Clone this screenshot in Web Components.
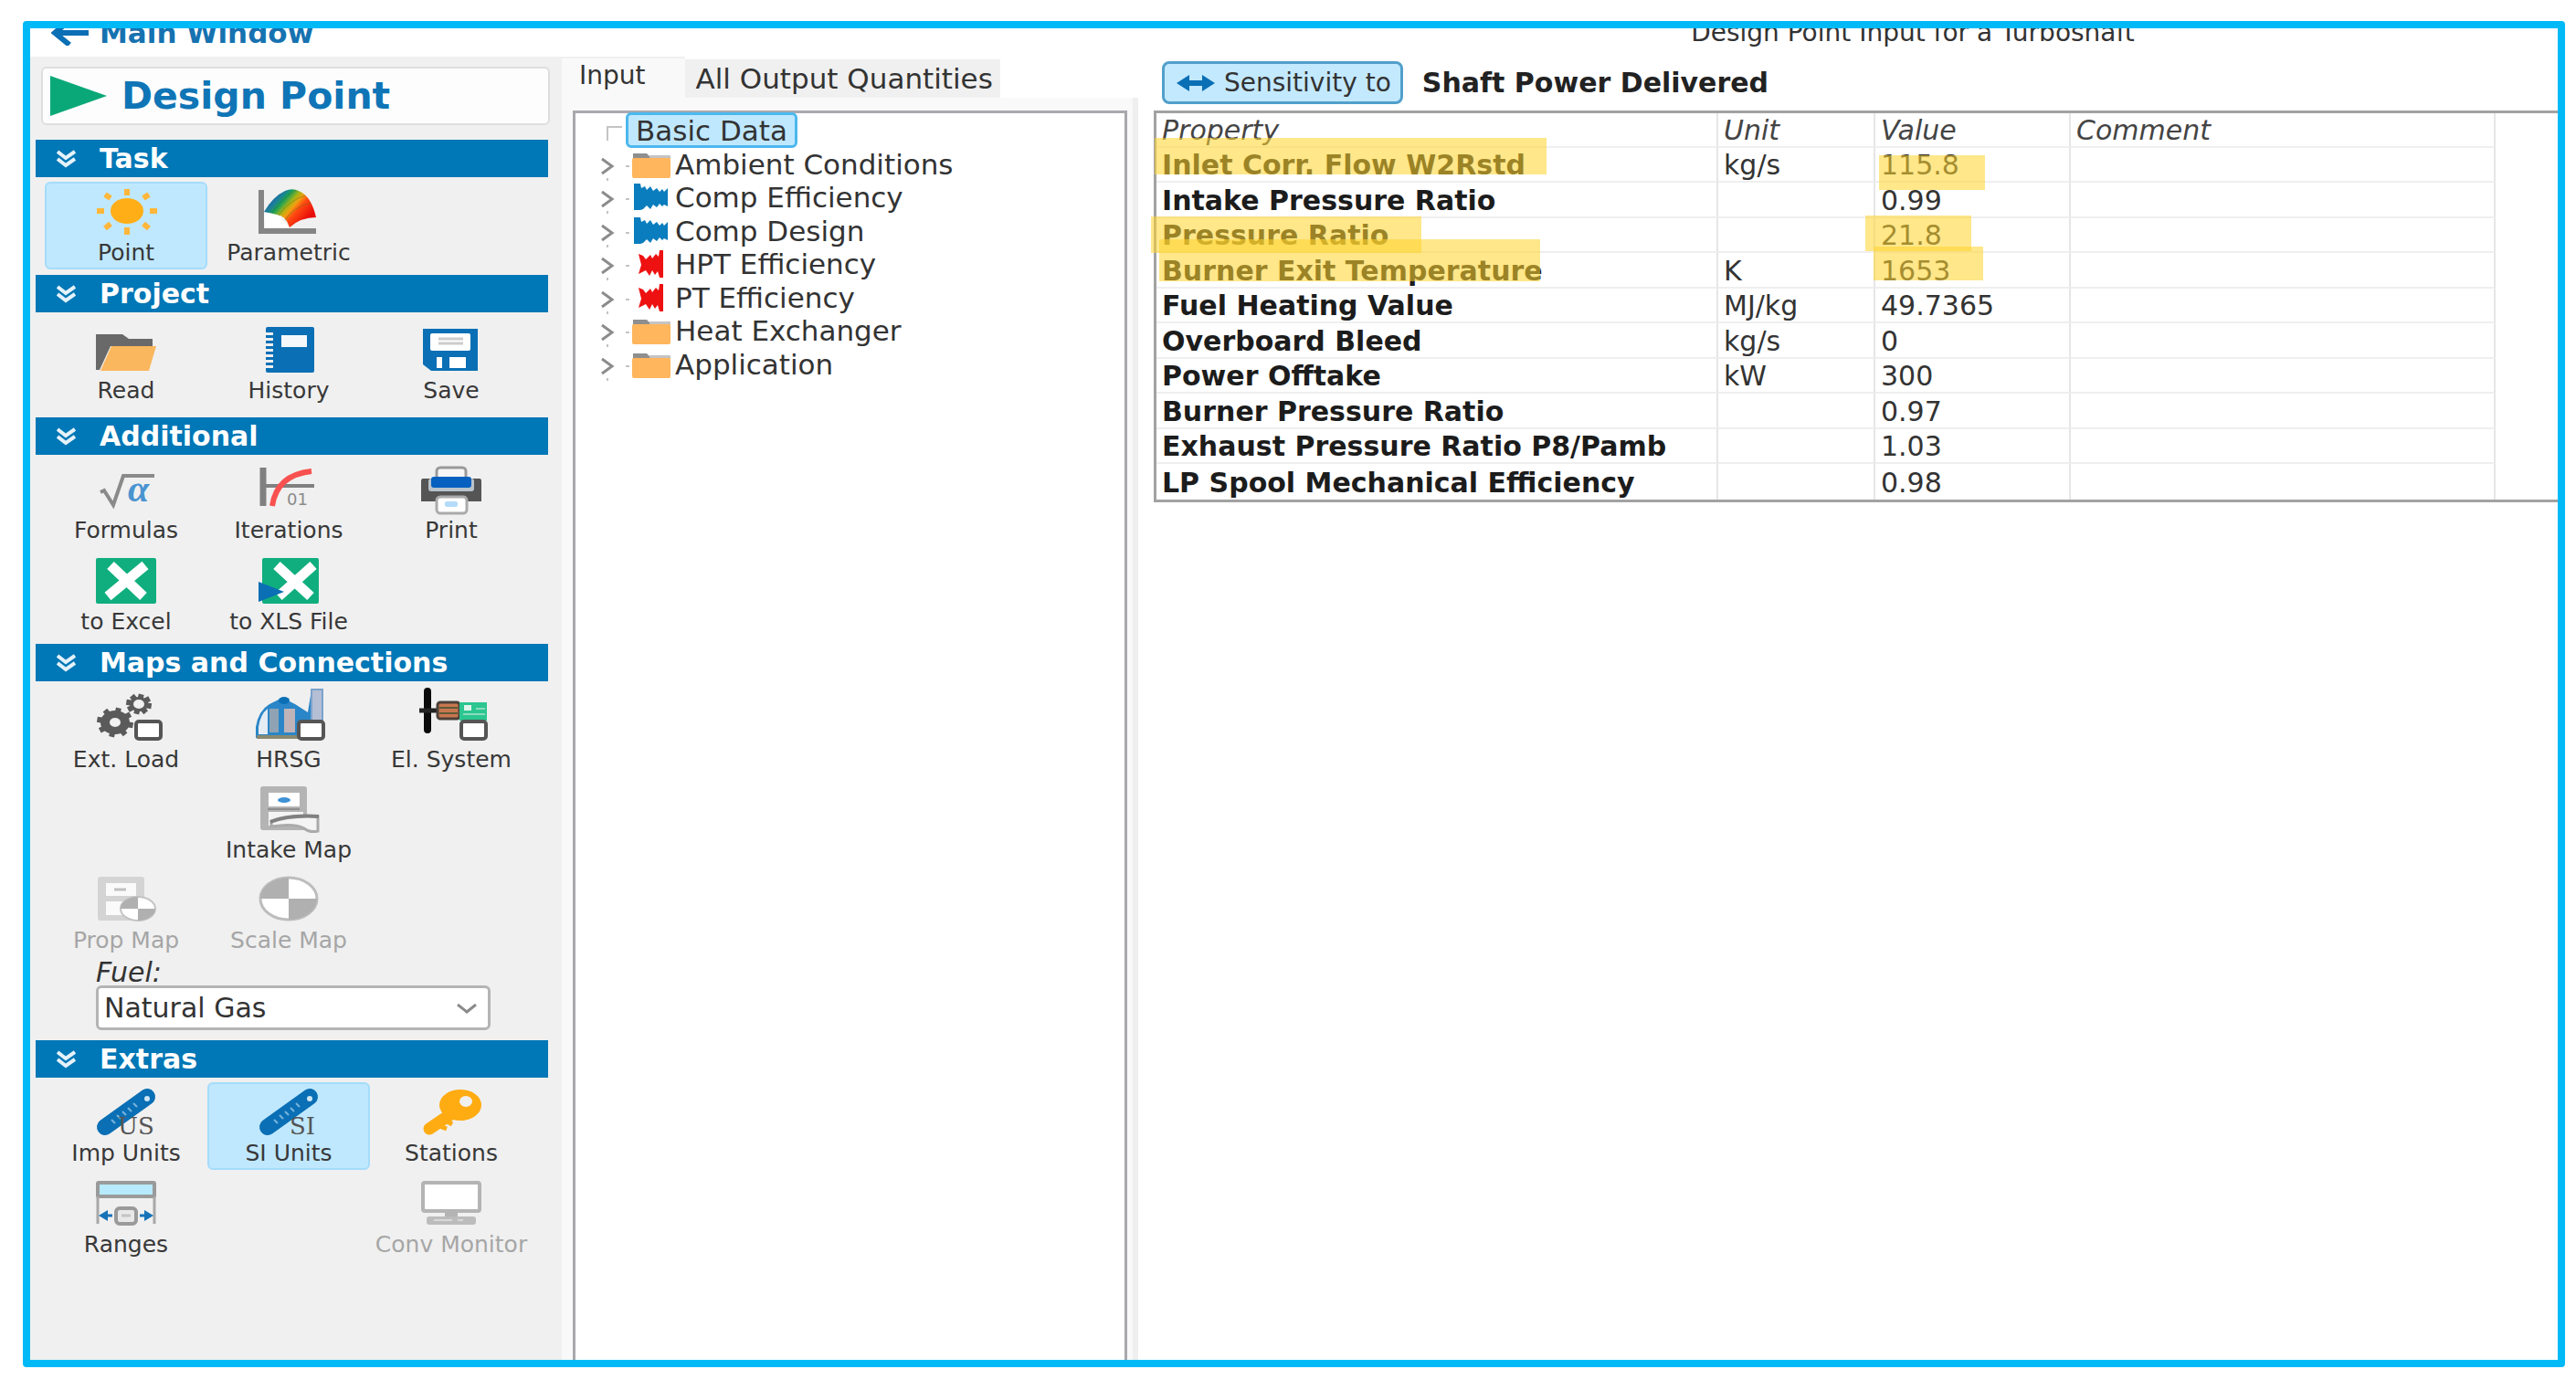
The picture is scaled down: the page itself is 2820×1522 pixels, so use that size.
<!DOCTYPE html>
<html lang="en">
<head>
<meta charset="utf-8">
<title>Design Point Input for a Turboshaft</title>
<style>
	html, body {
		height: 100%;
		margin: 0;
	}
	body {
		display: flex;
		background: #fff;
		color: #333;
		font-family: "DejaVu Sans", Verdana, sans-serif;
		font-size: 30px;
		line-height: 34px;
	}
</style>
</head>
<body>
<gt-window>
	<gt-sidebar slot="sidebar">
		<gt-section heading="Task">
			<gt-tool icon="sun" label="Point" selected></gt-tool>
			<gt-tool icon="surface" label="Parametric"></gt-tool>
		</gt-section>
		<gt-section heading="Project" roomy>
			<gt-tool icon="folder" label="Read"></gt-tool>
			<gt-tool icon="notebook" label="History"></gt-tool>
			<gt-tool icon="disk" label="Save"></gt-tool>
		</gt-section>
		<gt-section heading="Additional">
			<gt-tool icon="root" label="Formulas"></gt-tool>
			<gt-tool icon="curve" label="Iterations"></gt-tool>
			<gt-tool icon="printer" label="Print"></gt-tool>
			<gt-tool icon="excel" label="to Excel"></gt-tool>
			<gt-tool icon="xls" label="to XLS File"></gt-tool>
		</gt-section>
		<gt-section heading="Maps and Connections" roomy>
			<gt-tool icon="gears" label="Ext. Load"></gt-tool>
			<gt-tool icon="plant" label="HRSG"></gt-tool>
			<gt-tool icon="motor" label="El. System"></gt-tool>
			<gt-tool icon="cabinet" label="Intake Map" column="2"></gt-tool>
			<gt-tool icon="propmap" label="Prop Map" column="1" disabled></gt-tool>
			<gt-tool icon="target" label="Scale Map" disabled></gt-tool>
			<gt-fuel></gt-fuel>
		</gt-section>
		<gt-section heading="Extras">
			<gt-tool icon="rulerus" label="Imp Units"></gt-tool>
			<gt-tool icon="rulersi" label="SI Units" selected></gt-tool>
			<gt-tool icon="key" label="Stations"></gt-tool>
			<gt-tool icon="ranges" label="Ranges"></gt-tool>
			<gt-tool icon="monitor" label="Conv Monitor" column="3" disabled></gt-tool>
		</gt-section>
	</gt-sidebar>
	<gt-tabs slot="tree">
		<gt-tree-item selected>Basic Data</gt-tree-item>
		<gt-tree-item icon="dir">Ambient Conditions</gt-tree-item>
		<gt-tree-item icon="comp">Comp Efficiency</gt-tree-item>
		<gt-tree-item icon="comp">Comp Design</gt-tree-item>
		<gt-tree-item icon="turb">HPT Efficiency</gt-tree-item>
		<gt-tree-item icon="turb">PT Efficiency</gt-tree-item>
		<gt-tree-item icon="dir">Heat Exchanger</gt-tree-item>
		<gt-tree-item icon="dir">Application</gt-tree-item>
	</gt-tabs>
	<gt-properties slot="properties"></gt-properties>
</gt-window>

<script>
const BOX = '<rect x="44" y="28" width="27" height="19" rx="3" fill="#fff" stroke="#555" stroke-width="4"/>';

const gear = ( cx, cy, rx, ry, hole ) => {
	let teeth = '';
	for ( let i = 0; i < 8; i++ ) {
		const a = i * Math.PI / 4 + 0.2;
		const x = ( cx + Math.cos( a ) * rx ).toFixed( 1 );
		const y = ( cy + Math.sin( a ) * ry ).toFixed( 1 );
		teeth += `M${ cx } ${ cy }L${ x } ${ y }`;
	}
	return `<path d="${ teeth }" stroke="#5a5a5a" stroke-width="6"/>
		<ellipse cx="${ cx }" cy="${ cy }" rx="${ rx - 4 }" ry="${ ry - 3 }" fill="#5a5a5a"/>
		<ellipse cx="${ cx }" cy="${ cy }" rx="${ hole + 1 }" ry="${ hole }" fill="#f0f0f0"/>`;
};

const ruler = ( text, x ) => `
	<path d="M10 41L56 8" stroke="#0a6fb5" stroke-width="18" stroke-linecap="round"/>
	<path d="M17 33l4 4M23 28l4 4M29 24l4 4M35 20l4 4M41 15l4 4" stroke="#79b4dc" stroke-width="2"/>
	<circle cx="56" cy="10" r="3" fill="#cfe6f5"/>
	<text x="${ x }" y="49" font-family="DejaVu Serif, serif" font-size="26" fill="#555">${ text }</text>`;

/* All tool icons share a 66x50 box; some reach a little over its edge. */
const ICONS = {
	sun: `<ellipse cx="34" cy="24" rx="18" ry="14" fill="#ffae17"/>
		<path d="M34 0v7M34 42v8M1 24h8M59 24h8M10 6l6 4M58 6l-6 4M10 43l6 -5M58 43l-6 -5" stroke="#ffb63a" stroke-width="6"/>`,
	surface: `<defs><linearGradient id="g" x1="0" y1="0.2" x2="0.85" y2="0.75">
			<stop offset="0.08" stop-color="#1c5fa8"/><stop offset="0.26" stop-color="#1d7f9a"/>
			<stop offset="0.36" stop-color="#14a05a"/><stop offset="0.5" stop-color="#a8b414"/>
			<stop offset="0.6" stop-color="#f0a010"/><stop offset="0.72" stop-color="#ff4a10"/>
			<stop offset="1" stop-color="#e80c0c"/></linearGradient></defs>
		<path d="M3 1V46H63" fill="none" stroke="#858585" stroke-width="6"/>
		<path d="M6 26L21 28L34 42H7Z" fill="#fff"/>
		<path d="M6 25Q16 8 29 2Q38 -2 46 3Q58 9 63 31Q46 31 34 42Q30 29 20 28Q13 26 6 25Z" fill="url(#g)"/>
		<path d="M14 26Q26 10 41 1M22 29Q34 12 51 7M29 34Q38 20 57 15" fill="none" stroke="#5a6a20" stroke-opacity=".45"/>`,
	folder: `<path d="M0 8H29L36 13H62V21H16L4 47H0Z" fill="#696969"/>
		<path d="M17 21H66L58 48H5Z" fill="#fbb75e"/>`,
	notebook: `<rect x="8" y="0" width="53" height="50" rx="2" fill="#0a6fb5"/>
		<rect x="25" y="9" width="28" height="13" fill="#f4f8fb"/>
		<path d="M12 6V46" stroke="#f0f0f0" stroke-width="8" stroke-dasharray="3 3"/>`,
	disk: `<path d="M2 2H62V48H11L2 41Z" fill="#0a6fb5"/>
		<rect x="10" y="7" width="44" height="19" rx="2" fill="#fff"/>
		<path d="M19 13H46M19 18H46" stroke="#ccc" stroke-width="3"/>
		<rect x="17" y="33" width="32" height="12" fill="#fff"/>
		<rect x="23" y="33" width="8" height="12" fill="#0a6fb5"/>`,
	root: `<path d="M5 28L9 26L19 42L30 10H64" fill="none" stroke="#8a8a8a" stroke-width="4"/>
		<text x="35" y="38" font-family="Liberation Serif, serif" font-size="42" font-style="italic" font-weight="bold" fill="#4a94d0">α</text>`,
	curve: `<path d="M5 1V43" stroke="#808080" stroke-width="7"/>
		<path d="M5 21H61" stroke="#808080" stroke-width="4"/>
		<path d="M15 43Q20 9 58 5" fill="none" stroke="#f8514f" stroke-width="6"/>
		<text x="31" y="42" font-size="18" fill="#8a8a8a">01</text>`,
	printer: `<rect x="17" y="1" width="32" height="20" rx="4" fill="#f6f6f6" stroke="#9a9a9a" stroke-width="3"/>
		<path d="M2 13H64Q66 13 66 16V38H0V16Q0 13 2 13Z" fill="#555"/>
		<rect x="8" y="13" width="50" height="14" rx="3" fill="#b9c3cc"/>
		<rect x="11" y="11" width="44" height="12" rx="3" fill="#0560bf"/>
		<rect x="17" y="33" width="33" height="18" rx="4" fill="#fff" stroke="#aaa" stroke-width="3"/>
		<rect x="26" y="38" width="14" height="6" rx="2" fill="#b4dcfa"/>`,
	excel: `<rect width="66" height="50" rx="2" fill="#10ae7e"/>
		<path d="M16 8L52 42M54 8L13 42" stroke="#fff" stroke-width="11"/>`,
	xls: `<rect x="4" width="62" height="50" rx="2" fill="#10ae7e"/>
		<path d="M20 8L57 42M60 8L22 42" stroke="#fff" stroke-width="11"/>
		<path d="M0 26L28 37L0 48Z" fill="#0a6fb5"/>`,
	gears: gear( 21, 29, 20, 16, 5 ) + gear( 47, 9, 14, 11, 5 ) + BOX,
	plant: `<path d="M-3 46V34Q0 16 12 9L26 2L40 9L54 18L58 -7H70V46Z" fill="#2a86c8"/>
		<path d="M0 42V34Q2 20 10 14V42Z" fill="#e4ecf4"/>
		<rect x="12" y="14" width="10" height="26" fill="#8fa3b4"/>
		<rect x="28" y="14" width="12" height="26" fill="#c0b4b8"/>
		<rect x="58" y="-7" width="12" height="34" fill="#b4bed4" stroke="#7ba3ce" stroke-width="2"/>
		<ellipse cx="28" cy="5" rx="6" ry="4" fill="#0a6fb5"/>
		<path d="M-2 45H44" stroke="#8a8a70" stroke-width="4"/>` + BOX,
	motor: `<path d="M7 -5V37" stroke="#0a0a0a" stroke-width="8" stroke-linecap="round"/>
		<path d="M-2 16H18" stroke="#222" stroke-width="5"/>
		<rect x="18" y="7" width="24" height="18" rx="3" fill="#c9764f" stroke="#4a4038" stroke-width="3"/>
		<path d="M20 13H40M20 19H40" stroke="#5c5a38" stroke-width="2"/>
		<rect x="42" y="7" width="30" height="20" fill="#2cc690"/>
		<rect x="47" y="10" width="8" height="6" fill="#dff5ec"/>
		<path d="M60 14H70M46 20H70" stroke="#8adcc0" stroke-width="2"/>` + BOX,
	cabinet: `<rect x="2" y="0" width="51" height="48" rx="3" fill="#b4b4b4"/>
		<rect x="11" y="7" width="34" height="15" fill="#fff"/>
		<ellipse cx="28" cy="15" rx="7" ry="3" fill="#3f92d6"/>
		<path d="M10 25H45" stroke="#8e8e8e" stroke-width="2"/>
		<rect x="11" y="28" width="38" height="15" fill="#f4f4f4"/>
		<path d="M14 38Q34 30 65 33V49Q56 51 50 46Q40 40 14 44Z" fill="#f4f4f4" stroke="#aaa" stroke-width="3"/>
		<path d="M13 39Q34 31 66 33" fill="none" stroke="#808080" stroke-width="4"/>`,
	propmap: `<rect x="2" y="0" width="51" height="48" rx="3" fill="#d4d4d4"/>
		<rect x="11" y="7" width="33" height="14" fill="#fafafa"/>
		<path d="M20 14H33" stroke="#c0c0c0" stroke-width="3"/>
		<rect x="11" y="27" width="33" height="15" fill="#fafafa"/>
		<ellipse cx="46" cy="35" rx="19" ry="13" fill="#fff" stroke="#c4c4c4" stroke-width="2"/>
		<path d="M46 35V22A19 13 0 0 0 27 35ZM46 35V48A19 13 0 0 0 65 35Z" fill="#b0b0b0"/>`,
	target: `<ellipse cx="33" cy="24" rx="31" ry="23" fill="#fff" stroke="#bdbdbd" stroke-width="3"/>
		<path d="M33 24V1A31 23 0 0 0 2 24ZM33 24V47A31 23 0 0 0 64 24Z" fill="#b0b0b0"/>`,
	rulerus: ruler( 'US', 24 ),
	rulersi: ruler( 'SI', 34 ),
	key: `<path d="M34 26L9 43" stroke="#ffab12" stroke-width="13" stroke-linecap="round"/>
		<path d="M20 40l8 3M27 34l7 4" stroke="#ffab12" stroke-width="5"/>
		<ellipse cx="43" cy="17" rx="23" ry="17" fill="#ffab12"/>
		<ellipse cx="49" cy="13" rx="7" ry="6" fill="#f0f0f0"/>`,
	ranges: `<rect x="2" y="2" width="62" height="15" rx="1" fill="#b6eafc" stroke="#9a9a9a" stroke-width="4"/>
		<path d="M2 17V47M64 17V47" stroke="#a8a8a8" stroke-width="3"/>
		<rect x="22" y="30" width="22" height="17" rx="4" fill="#e8e8e8" stroke="#9a9a9a" stroke-width="4"/>
		<path d="M28 38H38" stroke="#c4c4c4" stroke-width="3"/>
		<path d="M3 38L13 32V44ZM63 38L53 32V44Z" fill="#1673b8"/>
		<path d="M12 38H18M48 38H54" stroke="#1673b8" stroke-width="3"/>`,
	monitor: `<rect x="2" y="2" width="62" height="31" rx="2" fill="#fff" stroke="#b4b4b4" stroke-width="4"/>
		<path d="M33 34V40" stroke="#b4b4b4" stroke-width="14"/>
		<rect x="6" y="39" width="54" height="9" rx="3" fill="#bcbcbc"/>
		<path d="M14 43H34M40 43H46" stroke="#d8d8d8" stroke-width="2"/>`,
};

/* Tree glyphs use a 42x36 box. */
const TREE_ICONS = {
	dir: `<path d="M1 6H16L19 9H41V12H1Z" fill="#8f8f8f"/><rect x="19" y="8" width="23" height="4" fill="#c4c4c4"/>
		<rect y="11" width="42" height="22" rx="2" fill="#ffb65c"/>`,
	comp: `<path d="M2 3L9 3L10 8L14 6L16 10L20 6L23 11L27 8L30 12L33 9L35 12L39 8V28L35 26L33 28L30 25L27 29L23 26L20 31L16 27L12 31L9 32H2Z" fill="#0a7dbe"/>`,
	turb: `<path d="M7 7L12 9L15 13L20 8L22 12L26 7L29 10L30 3H34V33H30L28 26L25 30L22 25L19 31L15 25L11 27L7 29L10 19Z" fill="#ee1111"/>`,
};

const define = ( name, template ) => {
	customElements.define( name, class extends HTMLElement {
		constructor() {
			super();
			this.attachShadow( { mode: 'open' } ).innerHTML = template( this );
		}
	} );
};

define( 'gt-window', () => `
<style>
	:host {
		display: grid;
		grid-template-columns: 582px 631px 1fr;
		grid-template-rows: auto 1fr;
		flex: 1;
		box-sizing: border-box;
		margin: 23px 12px 25px 25px;
		border: 8px solid #00b9f7;
		border-radius: 4px;
		overflow: hidden;
	}
	header {
		display: grid;
		grid-column: 1 / -1;
		grid-template-columns: subgrid;
		align-items: start;
		height: 43px;
		margin-top: -12px;
	}
	a {
		display: flex;
		align-items: center;
		gap: 12px;
		padding-left: 23px;
		color: #1672b0;
		font-size: 31px;
		font-weight: bold;
		text-decoration: none;
	}
	h1 {
		grid-column: 3;
		margin: 0;
		padding-left: 142px;
		font-size: 28px;
		font-weight: normal;
		text-align: center;
	}
	slot {
		display: contents;
	}
</style>
<header>
	<a href="#main"><svg width="41" height="28" fill="none" stroke="#0a6fb5" stroke-width="6"><path d="M18 2L4 14L20 27M4 14H41"/></svg>Main Window</a>
	<h1>Design Point Input for a Turboshaft</h1>
</header>
<slot name="sidebar"></slot>
<slot name="tree"></slot>
<slot name="properties"></slot>
` );

define( 'gt-sidebar', () => `
<style>
	:host {
		display: block;
		background: #f0f0f0;
	}
	button {
		display: flex;
		align-items: center;
		gap: 16px;
		box-sizing: border-box;
		width: calc(100% - 25px);
		height: 64px;
		margin: 11px 13px 16px 12px;
		padding: 0 8px;
		background: #fdfdfd;
		border: 2px solid #dedede;
		border-radius: 6px;
		color: #0f75b6;
		font: bold 41px/48px "DejaVu Sans", sans-serif;
	}
</style>
<button><svg width="62" height="44"><path d="M0 0L62 22L0 44Z" fill="#0aa878"/></svg>Design Point</button>
<slot></slot>
` );

define( 'gt-section', el => `
<style>
	:host {
		display: block;
		margin: 0 15px 0 6px;
	}
	h2 {
		display: flex;
		align-items: center;
		gap: 26px;
		height: 41px;
		margin: 0;
		padding-left: 23px;
		background: #0077b6;
		color: #fff;
		font-size: 30px;
		line-height: 40px;
	}
	.tools {
		display: grid;
		grid-template-columns: repeat(3, 178px);
		row-gap: 4px;
		padding: 5px 0 6px 10px;
	}
	:host([roomy]) .tools {
		row-gap: 3px;
		padding: 8px 0 11px 10px;
	}
</style>
<h2><svg width="21" height="20" fill="none" stroke="#e4f2fa" stroke-width="4"><path d="M1 2L10 9L20 2M1 10L10 17L20 10"/></svg>${ el.getAttribute( 'heading' ) }</h2>
<div class="tools"><slot></slot></div>
` );

define( 'gt-tool', el => `
<style>
	:host {
		display: block;
		grid-column: ${ el.getAttribute( 'column' ) || 'auto' };
	}
	button {
		display: flex;
		flex-direction: column;
		align-items: center;
		gap: 6px;
		box-sizing: border-box;
		width: 100%;
		height: 96px;
		padding: 6px 0 0;
		background: none;
		border: 2px solid transparent;
		border-radius: 6px;
		color: #383838;
		font: 25px/28px "DejaVu Sans", sans-serif;
		white-space: nowrap;
	}
	:host([selected]) button {
		background: #bfe8ff;
		border-color: #a5dcfb;
	}
	button:disabled {
		color: #a6a6a6;
	}
	svg {
		flex: none;
		overflow: visible;
	}
</style>
<button ${ el.hasAttribute( 'disabled' ) ? 'disabled' : '' }>
	<svg width="66" height="50" fill="none">${ ICONS[ el.getAttribute( 'icon' ) ] }</svg>
	${ el.getAttribute( 'label' ) }
</button>
` );

define( 'gt-fuel', () => `
<style>
	:host {
		display: block;
		grid-column: 1 / -1;
		padding: 0 46px 0 56px;
	}
	label {
		display: block;
		font-style: italic;
		line-height: 28px;
	}
	.field {
		position: relative;
	}
	select {
		appearance: none;
		display: block;
		width: 100%;
		height: 49px;
		padding: 0 6px;
		background: #fff;
		border: 3px solid #b4b4b4;
		border-radius: 6px;
		color: #333;
		font: 30px/36px "DejaVu Sans", sans-serif;
	}
	svg {
		position: absolute;
		right: 15px;
		top: 20px;
		pointer-events: none;
	}
</style>
<label for="fuel">Fuel:</label>
<div class="field">
	<select id="fuel"><option>Natural Gas</option></select>
	<svg width="22" height="12" fill="none" stroke="#8a8a8a" stroke-width="3"><path d="M1 1L11 9L21 1"/></svg>
</div>
` );

define( 'gt-tabs', () => `
<style>
	:host {
		display: flex;
		flex-direction: column;
		box-sizing: border-box;
		border-right: 6px solid #efefef;
		background: #f9f9f9;
	}
	nav {
		display: flex;
		align-items: flex-end;
		height: 45px;
		background: #fff;
		margin-right: -6px;
	}
	button {
		height: 42px;
		padding: 0 8px 0 12px;
		background: #f0f0f0;
		border: 0;
		color: #333;
		font: 31px/38px "DejaVu Sans", sans-serif;
	}
	button[aria-selected="true"] {
		height: 45px;
		padding: 0 43px 5px 19px;
		background: #f9f9f9;
		border-top: 2px solid #f0f0f0;
		font-size: 28px;
		line-height: 34px;
	}
	.tree {
		flex: 1;
		margin: 14px 6px 0 12px;
		border: 3px solid #a8a8ae;
		border-bottom: 0;
		background: #fff;
	}
</style>
<nav role="tablist">
	<button role="tab" aria-selected="true">Input</button>
	<button role="tab" aria-selected="false">All Output Quantities</button>
</nav>
<div class="tree" role="tree"><slot></slot></div>
` );

define( 'gt-tree-item', el => el.hasAttribute( 'selected' ) ? `
<style>
	:host {
		display: flex;
		align-items: center;
		gap: 4px;
		height: 37px;
		padding-left: 33px;
		font-size: 31px;
	}
	button {
		height: 39px;
		padding: 0 8px;
		background: #bfe8ff;
		border: 3px solid #4cb8ee;
		border-radius: 6px;
		color: #333;
		font: 31px/32px "DejaVu Sans", sans-serif;
	}
</style>
<svg width="18" height="22" fill="none" stroke="#c4c4c4" stroke-width="2"><path d="M2 22V7H18"/></svg>
<button><slot></slot></button>
` : `
<style>
	:host {
		display: flex;
		align-items: center;
		height: 36px;
		padding-left: 26px;
		font-size: 31px;
	}
	:host(:nth-child(even)) {
		height: 37px;
	}
	button {
		display: flex;
		padding: 0;
		background: none;
		border: 0;
	}
	.icon {
		margin: 0 5px 0 2px;
	}
</style>
<button aria-label="Expand"><svg width="34" height="36" fill="none" stroke="#8c8c8c" stroke-width="3"><path d="M3 12L14 20L3 28"/><path d="M9 33v3M29 20h4" stroke="#c4c4c4" stroke-width="2"/></svg></button>
<svg class="icon" width="42" height="36">${ TREE_ICONS[ el.getAttribute( 'icon' ) ] }</svg>
<slot></slot>
` );

const PROPERTIES = [
	[ 'Inlet Corr. Flow W2Rstd', 'kg/s', '115.8' ],
	[ 'Intake Pressure Ratio', '', '0.99' ],
	[ 'Pressure Ratio', '', '21.8' ],
	[ 'Burner Exit Temperature', 'K', '1653' ],
	[ 'Fuel Heating Value', 'MJ/kg', '49.7365' ],
	[ 'Overboard Bleed', 'kg/s', '0' ],
	[ 'Power Offtake', 'kW', '300' ],
	[ 'Burner Pressure Ratio', '', '0.97' ],
	[ 'Exhaust Pressure Ratio P8/Pamb', '', '1.03' ],
	[ 'LP Spool Mechanical Efficiency', '', '0.98' ],
];

/* Highlighter strokes laid over the table: left, top, width, height. */
const MARKS = [
	[ 1, 30, 429, 40 ],
	[ -3, 116, 296, 40 ],
	[ 6, 141, 417, 46 ],
	[ 794, 49, 116, 38 ],
	[ 779, 115, 116, 39 ],
	[ 788, 149, 120, 37 ],
];

define( 'gt-properties', () => `
<style>
	:host {
		display: block;
		padding: 5px 0 0 17px;
		background: #fff;
	}
	.bar {
		display: flex;
		align-items: center;
		gap: 21px;
		margin: 0 0 7px 9px;
		color: #222;
		font-weight: bold;
	}
	button {
		display: flex;
		align-items: center;
		gap: 10px;
		box-sizing: border-box;
		height: 47px;
		padding: 0 10px 0 13px;
		background: #c3e9ff;
		border: 3px solid #519fcb;
		border-radius: 8px;
		color: #333;
		font: 28px/34px "DejaVu Sans", sans-serif;
	}
	.sheet {
		position: relative;
		border: 3px solid #a2a2a2;
		border-right: 0;
	}
	table {
		width: calc(100% - 68px);
		border-spacing: 0;
		table-layout: fixed;
	}
	tr {
		height: 38px;
	}
	tr:nth-child(even) {
		height: 39px;
	}
	th, td {
		box-sizing: border-box;
		padding: 2px 0 0 6px;
		border-right: 2px solid #e6e6e6;
		border-bottom: 2px solid #efefef;
		line-height: 34px;
		text-align: left;
		white-space: nowrap;
	}
	thead th {
		color: #444;
		font-style: italic;
		font-weight: normal;
	}
	tbody th {
		color: #1c1c1c;
	}
	tbody tr:last-child > * {
		border-bottom: 0;
	}
	th:nth-child(1) { width: 615px; }
	th:nth-child(2) { width: 172px; }
	th:nth-child(3) { width: 214px; }
	.mark {
		position: absolute;
		background: #ffd42e;
		opacity: 0.56;
		pointer-events: none;
	}
</style>
<div class="bar">
	<button><svg width="42" height="18" fill="#0a6fb5"><path d="M0 9L14 0V6H28V0L42 9L28 18V12H14V18Z"/></svg>Sensitivity to</button>
	<span>Shaft Power Delivered</span>
</div>
<div class="sheet">
	<table>
		<thead><tr><th>Property</th><th>Unit</th><th>Value</th><th>Comment</th></tr></thead>
		<tbody>${ PROPERTIES.map( ( [ name, unit, value ] ) =>
			`<tr><th scope="row">${ name }</th><td>${ unit }</td><td>${ value }</td><td></td></tr>` ).join( '' ) }</tbody>
	</table>
	${ MARKS.map( ( [ x, y, w, h ] ) =>
		`<div class="mark" style="left:${ x - 3 }px;top:${ y - 3 }px;width:${ w }px;height:${ h }px"></div>` ).join( '' ) }
</div>
` );
</script>
</body>
</html>
